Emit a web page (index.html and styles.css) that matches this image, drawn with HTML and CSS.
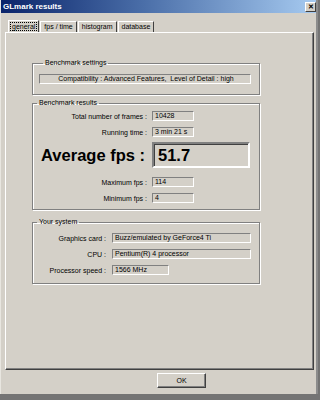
FILE: index.html
```html
<!DOCTYPE html>
<html lang="en">
<head>
    <meta charset="UTF-8">
    <meta name="viewport" content="width=device-width, initial-scale=1.0">
    <title>GLmark results</title>
    <link rel="stylesheet" href="styles.css">
</head>
<body>
    <div class="window">
        <div class="titlebar">
            <span class="title">GLmark results</span>
            <span class="close">&#x2715;</span>
        </div>

        <div class="tabs">
            <div class="tab active"><span class="focus">general</span></div>
            <div class="tab">fps / time</div>
            <div class="tab">histogram</div>
            <div class="tab">database</div>
        </div>

        <div class="panel">
            <fieldset class="group group-settings">
                <legend>Benchmark settings</legend>
                <div class="field field-settings">Compatibility : Advanced Features,&nbsp; Level of Detail : high</div>
            </fieldset>

            <fieldset class="group group-results">
                <legend>Benchmark results</legend>
                <div class="row">
                    <span class="label">Total number of frames :</span>
                    <span class="field field-short">10428</span>
                </div>
                <div class="row row-gap5">
                    <span class="label">Running time :</span>
                    <span class="field field-short">3 min 21 s</span>
                </div>
                <div class="row row-big">
                    <span class="label label-big">Average fps :</span>
                    <span class="field field-big">51.7</span>
                </div>
                <div class="row row-after-big">
                    <span class="label">Maximum fps :</span>
                    <span class="field field-short">114</span>
                </div>
                <div class="row">
                    <span class="label">Minimum fps :</span>
                    <span class="field field-short">4</span>
                </div>
            </fieldset>

            <fieldset class="group group-system">
                <legend>Your system</legend>
                <div class="row">
                    <span class="label">Graphics card :</span>
                    <span class="field field-long">Buzz/emulated by GeForce4 Ti</span>
                </div>
                <div class="row row-gap7">
                    <span class="label">CPU :</span>
                    <span class="field field-long">Pentium(R) 4 processor</span>
                </div>
                <div class="row">
                    <span class="label">Processor speed :</span>
                    <span class="field field-speed">1566 MHz</span>
                </div>
            </fieldset>
        </div>

        <div class="footer">
            <button class="ok">OK</button>
        </div>
    </div>
</body>
</html>
```

FILE: styles.css
```css
* {
    margin: 0;
    padding: 0;
    box-sizing: border-box;
    font-family: 'Liberation Sans', Arial, sans-serif;
}

body {
    background: #747474;
    width: 320px;
    height: 400px;
    overflow: hidden;
}

.window {
    width: 318px;
    height: 394px;
    background: #d4d0c8;
    border-left: 1px solid #e8e6e0;
    border-right: 2px solid #8c8c8c;
    color: #000;
    font-size: 7px;
}

/* title bar */
.titlebar {
    height: 13px;
    display: flex;
    align-items: center;
    justify-content: space-between;
    background: linear-gradient(to right, #0a246a, #4a6ea8 45%, #a6caf0);
    padding-left: 2px;
}

.title {
    color: #fff;
    font-weight: bold;
    font-size: 8px;
}

.close {
    width: 11px;
    height: 10px;
    margin-right: 0;
    background: #d4d0c8;
    border: 1px solid;
    border-color: #fff #404040 #404040 #fff;
    font-size: 7px;
    font-weight: bold;
    line-height: 8px;
    text-align: center;
}

/* tabs */
.tabs {
    display: flex;
    align-items: flex-end;
    margin-top: 8px;
    margin-left: 7px;
    height: 11px;
}

.tab {
    height: 11px;
    padding: 0 3px;
    border: 1px solid;
    border-color: #fff #404040 transparent #fff;
    border-bottom: none;
    line-height: 9px;
    margin-right: 1px;
}

.tab.active {
    height: 12px;
    padding: 1px 1px 0;
    position: relative;
    z-index: 1;
    background: #d4d0c8;
}

.focus {
    display: block;
    border: 1px dotted #000;
    padding: 0 1px;
    line-height: 7px;
}

/* tab panel */
.panel {
    margin-left: 4px;
    width: 309px;
    height: 338px;
    border: 1px solid;
    border-color: #fff #404040 #404040 #fff;
    box-shadow: inset -1px -1px 0 #808080;
    padding-top: 26px;
    padding-left: 26px;
}

.group {
    width: 228px;
    border: 1px solid #808080;
    box-shadow: inset 1px 1px 0 #fff, 1px 1px 0 #fff;
}

.group legend {
    margin-left: 4px;
    padding: 0 2px;
    line-height: 8px;
    font-size: 7px;
    color: #000;
}

.group-settings {
    padding: 7px 0 10px 6px;
}

.group-results {
    margin-top: 4px;
    padding: 4px 0 6px 0;
}

.group-system {
    margin-top: 8px;
    padding: 7px 0 8px 0;
}

.row {
    display: flex;
    align-items: center;
    margin-bottom: 6px;
}

.row:last-child {
    margin-bottom: 0;
}

.row-gap5 {
    margin-bottom: 5px;
}

.row-big {
    margin-bottom: 9px;
}

.row-gap7 {
    margin-bottom: 6px;
}

.label {
    text-align: right;
    white-space: nowrap;
}

.group-results .label {
    width: 114px;
    margin-right: 5px;
}

.group-results .label-big {
    width: 112px;
    margin-right: 7px;
    font-size: 16.5px;
    font-weight: bold;
}

.group-system .label {
    width: 73px;
    margin-right: 6px;
}

.field {
    display: block;
    height: 10px;
    line-height: 8px;
    padding-left: 2px;
    border: 1px solid;
    border-color: #808080 #fff #fff #808080;
    background: #d4d0c8;
    white-space: nowrap;
}

.field-settings {
    width: 212px;
    text-align: center;
}

.field-short {
    width: 42px;
}

.field-big {
    width: 98px;
    height: 26px;
    border-width: 2px;
    border-color: #808080 #fff #fff #808080;
    box-shadow: inset 1px 1px 0 #404040;
    font-size: 16.5px;
    font-weight: bold;
    line-height: 22px;
    padding-left: 4px;
}

.field-long {
    width: 139px;
}

.field-speed {
    width: 57px;
}

/* footer */
.footer {
    padding-top: 3px;
    padding-left: 156px;
}

.ok {
    width: 49px;
    height: 15px;
    background: #d4d0c8;
    border: 1px solid;
    border-color: #fff #404040 #404040 #fff;
    box-shadow: inset -1px -1px 0 #808080;
    font-size: 7px;
    color: #000;
}
```
